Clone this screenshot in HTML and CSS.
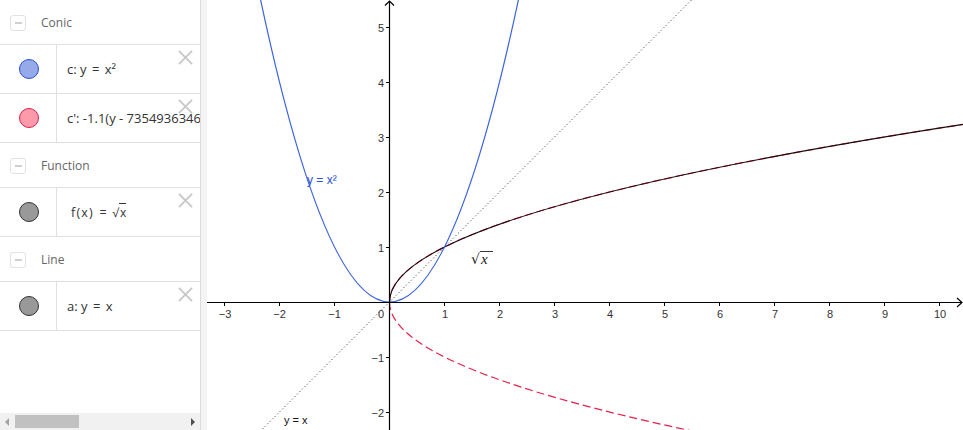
FILE: index.html
```html
<!DOCTYPE html>
<html>
<head>
<meta charset="utf-8">
<link rel="stylesheet" href="styles.css">
</head>
<body>
<div class="app">
  <aside class="algebra">
    <div class="list">
      <div class="group"><span class="toggle"></span><span class="group-name">Conic</span></div>
      <div class="item">
        <div class="marble"><span class="dot dot-blue"></span></div>
        <div class="formula">c: y <span class="eq">=</span> x²</div>
        <svg class="close" viewBox="0 0 16 16"><path d="M1 1L15 15M15 1L1 15"/></svg>
      </div>
      <div class="item">
        <div class="marble"><span class="dot dot-red"></span></div>
        <div class="formula formula-clip">c': -1.1(y - 7354936346</div>
        <svg class="close" viewBox="0 0 16 16"><path d="M1 1L15 15M15 1L1 15"/></svg>
      </div>
      <div class="group"><span class="toggle"></span><span class="group-name">Function</span></div>
      <div class="item">
        <div class="marble"><span class="dot dot-gray"></span></div>
        <div class="formula formula-math">f<span class="paren">(</span>x<span class="paren">)</span> <span class="eq">=</span> <span class="sqrt">√<span class="radicand">x</span></span></div>
        <svg class="close" viewBox="0 0 16 16"><path d="M1 1L15 15M15 1L1 15"/></svg>
      </div>
      <div class="group"><span class="toggle"></span><span class="group-name">Line</span></div>
      <div class="item">
        <div class="marble"><span class="dot dot-gray"></span></div>
        <div class="formula">a: y <span class="eq">=</span> x</div>
        <svg class="close" viewBox="0 0 16 16"><path d="M1 1L15 15M15 1L1 15"/></svg>
      </div>
    </div>
    <div class="hscroll">
      <span class="arrow arrow-left"></span>
      <span class="thumb"></span>
      <span class="track"></span>
      <span class="arrow arrow-right"></span>
    </div>
  </aside>
  <div class="splitter"></div>
  <main class="graphics">
    <svg class="plot" viewBox="207 0 756 430" width="756" height="430">
      <line x1="257.5" y1="434" x2="691.5" y2="0" class="dotted"/>
      <path d="M389.5 302 Q389.5 392.75 988.45 483.5" class="dashed-red"/>
      <path d="M389.5 302 Q389.5 211.25 988.45 120.5" class="dashed-red"/>
      <path d="M389.5 302 Q389.5 211.25 988.45 120.5" class="sqrt-curve"/>
      <path d="M257.5 -14.8 Q389.5 618.8 521.5 -14.8" class="parabola"/>

      <line x1="207" y1="302.5" x2="962" y2="302.5" class="axis"/>
      <polyline points="957,298 962,302.5 957,307" class="axis-arrow"/>
      <line x1="389.5" y1="430" x2="389.5" y2="1" class="axis"/>
      <polyline points="385,5.5 389.5,1 394,5.5" class="axis-arrow"/>

      <g class="ticks">
        <line x1="224.5" y1="302" x2="224.5" y2="306"/>
        <line x1="279.5" y1="302" x2="279.5" y2="306"/>
        <line x1="334.5" y1="302" x2="334.5" y2="306"/>
        <line x1="444.5" y1="302" x2="444.5" y2="306"/>
        <line x1="499.5" y1="302" x2="499.5" y2="306"/>
        <line x1="554.5" y1="302" x2="554.5" y2="306"/>
        <line x1="609.5" y1="302" x2="609.5" y2="306"/>
        <line x1="664.5" y1="302" x2="664.5" y2="306"/>
        <line x1="719.5" y1="302" x2="719.5" y2="306"/>
        <line x1="774.5" y1="302" x2="774.5" y2="306"/>
        <line x1="829.5" y1="302" x2="829.5" y2="306"/>
        <line x1="884.5" y1="302" x2="884.5" y2="306"/>
        <line x1="939.5" y1="302" x2="939.5" y2="306"/>
        <line x1="386" y1="27.5" x2="389.5" y2="27.5"/>
        <line x1="386" y1="82.5" x2="389.5" y2="82.5"/>
        <line x1="386" y1="137.5" x2="389.5" y2="137.5"/>
        <line x1="386" y1="192.5" x2="389.5" y2="192.5"/>
        <line x1="386" y1="247.5" x2="389.5" y2="247.5"/>
        <line x1="386" y1="357.5" x2="389.5" y2="357.5"/>
        <line x1="386" y1="412.5" x2="389.5" y2="412.5"/>
      </g>
      <g class="tick-labels">
        <text x="225" y="318">−3</text>
        <text x="279.5" y="318">−2</text>
        <text x="334.5" y="318">−1</text>
        <text x="445" y="318">1</text>
        <text x="500" y="318">2</text>
        <text x="555" y="318">3</text>
        <text x="610" y="318">4</text>
        <text x="665" y="318">5</text>
        <text x="720" y="318">6</text>
        <text x="775" y="318">7</text>
        <text x="830" y="318">8</text>
        <text x="885" y="318">9</text>
        <text x="940" y="318">10</text>
      </g>
      <g class="tick-labels-y">
        <text x="384" y="318">0</text>
        <text x="384" y="31.5">5</text>
        <text x="384" y="86.5">4</text>
        <text x="384" y="141.5">3</text>
        <text x="384" y="196.5">2</text>
        <text x="384" y="251.5">1</text>
        <text x="384" y="361.5">−1</text>
        <text x="384" y="416.5">−2</text>
      </g>

      <text x="307" y="184" class="label-blue">y = x²</text>
      <text x="471" y="264" class="label-math">√</text>
      <line x1="480" y1="251.5" x2="493" y2="251.5" class="vinculum"/>
      <text x="481" y="264" class="label-math label-italic">x</text>
      <text x="284" y="424" class="label-black">y = x</text>
    </svg>
  </main>
</div>
</body>
</html>
```

FILE: styles.css
```css
html, body {
  margin: 0;
  padding: 0;
  background: #fff;
}

.app {
  display: flex;
  width: 963px;
  height: 430px;
  overflow: hidden;
  font-family: "Open Sans", "Liberation Sans", sans-serif;
}

.algebra {
  width: 200px;
  flex: 0 0 200px;
  display: flex;
  flex-direction: column;
  border-right: 1px solid #dcdcdc;
  overflow: hidden;
  background: #fff;
}

.list {
  flex: 1;
}

.group {
  height: 44px;
  border-bottom: 1px solid #e0e0e0;
  display: flex;
  align-items: center;
  padding-left: 10px;
}

.toggle {
  width: 14px;
  height: 14px;
  border: 1px solid #e2e2e2;
  border-radius: 3px;
  position: relative;
  margin-right: 15px;
  margin-top: 1px;
}

.toggle::after {
  content: "";
  position: absolute;
  left: 4px;
  top: 6px;
  width: 7px;
  height: 2px;
  background: #d0d0d0;
}

.group-name {
  font-size: 12px;
  color: #666;
}

.item {
  height: 48px;
  border-bottom: 1px solid #e0e0e0;
  display: flex;
  align-items: center;
  position: relative;
}

.marble {
  width: 56px;
  height: 48px;
  flex: 0 0 56px;
  border-right: 1px solid #e0e0e0;
  display: flex;
  align-items: center;
  justify-content: center;
}

.dot {
  width: 18px;
  height: 18px;
  border-radius: 50%;
  display: block;
  margin-left: 2px;
}

.dot-blue {
  background: #96aaea;
  border: 1px solid #2a4fd4;
}

.dot-red {
  background: #ff9aab;
  border: 1px solid #dc1e4a;
}

.dot-gray {
  background: #999;
  border: 1px solid #333;
}

.formula {
  margin-left: 10px;
  font-size: 13px;
  color: #333;
  white-space: nowrap;
}

.formula-clip {
  overflow: hidden;
  width: 133px;
  flex: 0 0 133px;
}

.formula-math {
  margin-left: 14px;
  font-size: 12.5px;
  letter-spacing: 0.2px;
}

.paren {
  padding: 0 1px;
}

.eq {
  padding: 0 2px;
}

.sqrt {
  font-size: 12px;
}

.radicand {
  border-top: 1px solid #333;
  padding-left: 1px;
}

.close {
  position: absolute;
  left: 178px;
  top: 5px;
  width: 15px;
  height: 15px;
  fill: none;
  stroke: #c8c8c8;
  stroke-width: 2;
}

.hscroll {
  height: 17px;
  background: #f1f1f1;
  display: flex;
  align-items: center;
  padding: 0 5px;
}

.arrow {
  width: 0;
  height: 0;
  border-top: 4px solid transparent;
  border-bottom: 4px solid transparent;
}

.arrow-left {
  border-right: 4px solid #a3a3a3;
  margin-right: 6px;
}

.arrow-right {
  border-left: 4px solid #505050;
}

.thumb {
  width: 64px;
  height: 13px;
  background: #c1c1c1;
}

.track {
  flex: 1;
}

.splitter {
  width: 6px;
  flex: 0 0 6px;
  background: #f4f4f4;
}

.graphics {
  flex: 1;
  position: relative;
  overflow: hidden;
}

.plot {
  display: block;
}

.axis {
  stroke: #000;
  stroke-width: 1.2;
}

.axis-arrow {
  fill: none;
  stroke: #000;
  stroke-width: 1.2;
}

.ticks line {
  stroke: #000;
  stroke-width: 1;
}

.tick-labels text {
  font-family: "Liberation Sans", Arial, sans-serif;
  font-size: 11px;
  fill: #333;
  text-anchor: middle;
}

.tick-labels-y text {
  font-family: "Liberation Sans", Arial, sans-serif;
  font-size: 11px;
  fill: #333;
  text-anchor: end;
}

.dotted {
  stroke: #222;
  stroke-width: 1;
  stroke-dasharray: 1 2.5;
}

.dashed-red {
  fill: none;
  stroke: #e5204a;
  stroke-width: 1.2;
  stroke-dasharray: 8 4;
}

.sqrt-curve {
  fill: none;
  stroke: #1a0a0a;
  stroke-width: 1.2;
}

.parabola {
  fill: none;
  stroke: #3c64dc;
  stroke-width: 1.2;
}

.label-blue {
  font-family: "Liberation Sans", Arial, sans-serif;
  font-size: 12px;
  fill: #2a4fd4;
}

.label-black {
  font-family: "Liberation Sans", Arial, sans-serif;
  font-size: 11px;
  fill: #111;
}

.label-math {
  font-family: "DejaVu Serif", "Liberation Serif", serif;
  font-size: 14px;
  fill: #222;
}

.label-italic {
  font-style: italic;
  font-family: "Liberation Serif", serif;
  font-size: 15px;
}

.vinculum {
  stroke: #222;
  stroke-width: 0.9;
}
```
